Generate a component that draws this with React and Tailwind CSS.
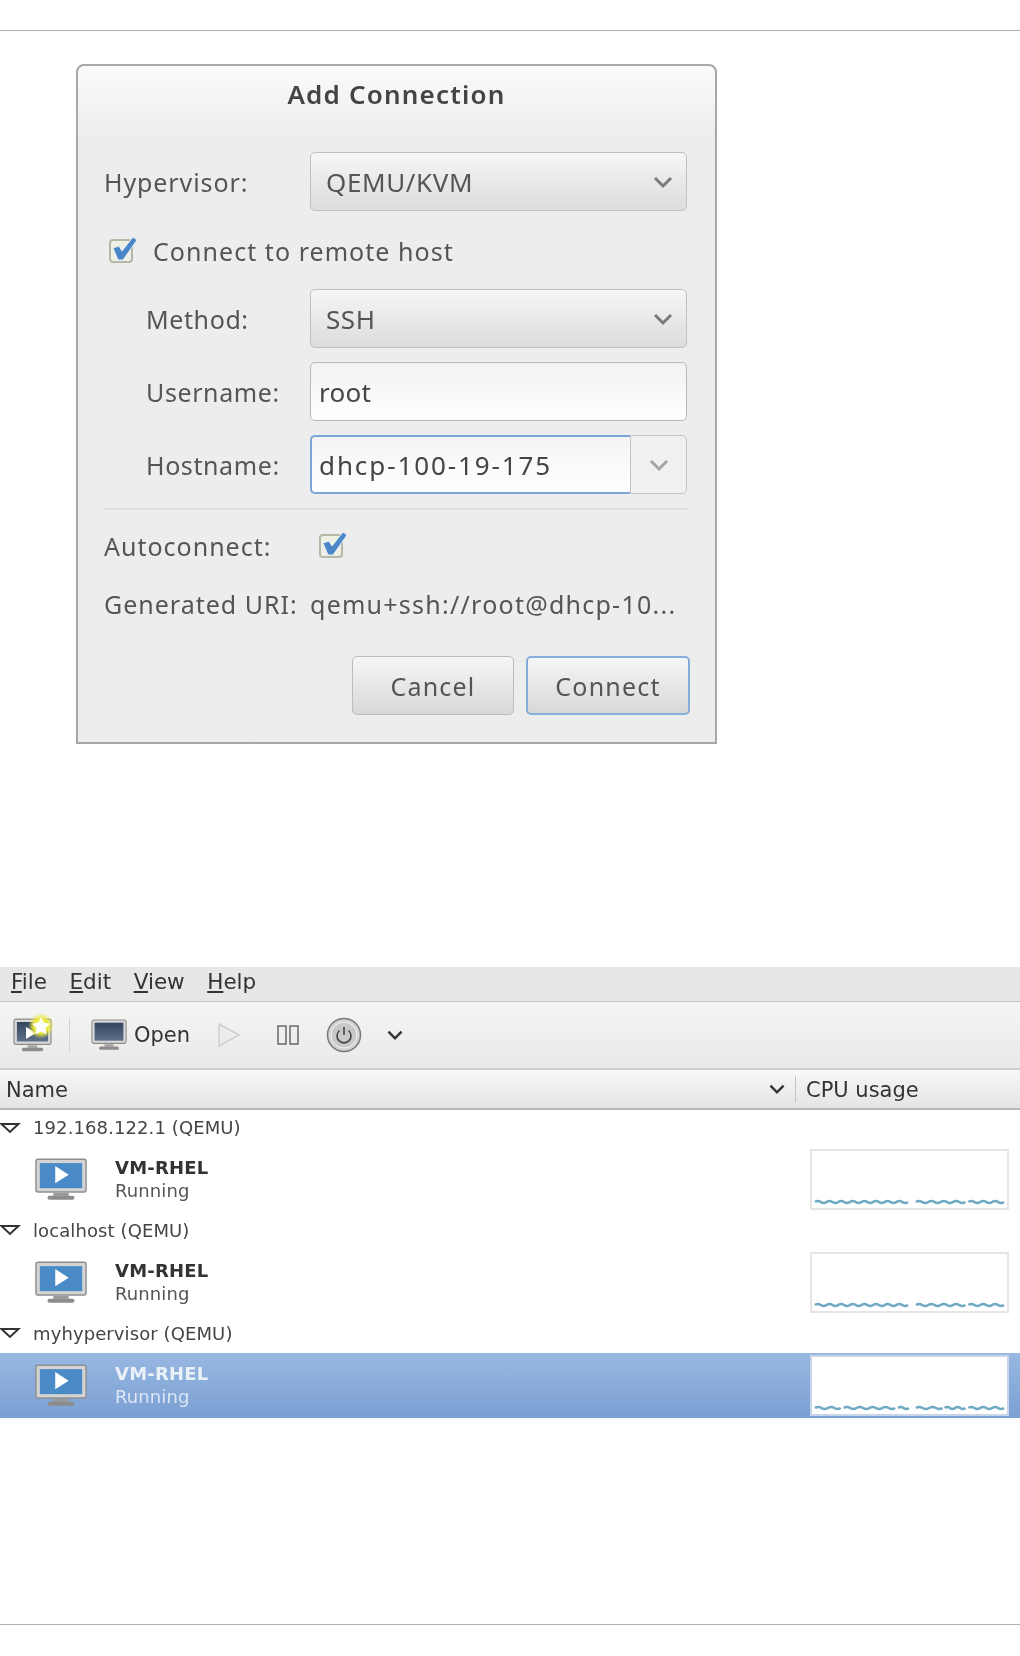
import React from 'react';

const dialogFont = { fontFamily: '"Noto Sans", sans-serif' };

function Chevron({ className = 'text-[#7a7a7a]', size = 22 }) {
  return (
    <svg width={size} height={size} viewBox="0 0 22 22" fill="none" className={className}>
      <path d="M3 7l8 8 8-8" stroke="currentColor" strokeWidth="3" />
    </svg>
  );
}

function Check() {
  return (
    <svg width="30" height="26" viewBox="0 0 30 26" className="-mt-[3px]">
      <rect x="1" y="3" width="22" height="22" rx="3" fill="#eef0e6" stroke="#b5b8a8" strokeWidth="2" />
      <path d="M4 11l6-2 3 5L24 0l4 3-14 20H9z" fill="#4a86c8" stroke="#e4ecf4" strokeWidth="1" />
    </svg>
  );
}

function Combo({ value }) {
  return (
    <div className="w-[377px] h-[59px] rounded-[5px] border border-[#c0c0c0] bg-linear-to-b from-[#f6f6f6] to-[#dcdcdc] flex items-center justify-between pl-[15px] pr-[12px] text-[26px] tracking-[0.6px] text-[#555]">
      <span className="pt-[2px]">{value}</span>
      <Chevron />
    </div>
  );
}

function FieldRow({ label, children, className = '' }) {
  return (
    <div className={`flex items-center pl-[68px] ${className}`}>
      <span className="w-[164px] pt-[3px] text-[25px] tracking-[0.6px] text-[#555]">{label}</span>
      {children}
    </div>
  );
}

function VmIcon() {
  return (
    <svg width="52" height="43" viewBox="0 0 54 44">
      <rect x="1" y="1" width="52" height="34" rx="2" fill="#d4d4d4" stroke="#8e8e8e" strokeWidth="1.5" />
      <rect x="5" y="5" width="44" height="26" fill="#4a8ac6" />
      <path d="M21 8l14 9-14 9z" fill="#ffffff" />
      <rect x="19" y="36" width="16" height="3" fill="#9a9a9a" />
      <rect x="13" y="39" width="28" height="4" rx="2" fill="#8c8c8c" />
    </svg>
  );
}

function DarkMonitor({ width, gradId }) {
  return (
    <svg width={width} height={width * 0.88} viewBox="0 0 40 35">
      <defs>
        <linearGradient id={gradId} x1="0" y1="0" x2="0" y2="1">
          <stop offset="0" stopColor="#33465e" />
          <stop offset="1" stopColor="#5d7088" />
        </linearGradient>
      </defs>
      <rect x="1" y="1" width="38" height="26" rx="2" fill="#d8d8d8" stroke="#8c8c8c" strokeWidth="1.2" />
      <rect x="4" y="4" width="32" height="20" fill={`url(#${gradId})`} />
      <rect x="15" y="28" width="10" height="2.5" fill="#a0a0a0" />
      <rect x="9" y="30.5" width="22" height="3.5" rx="1.7" fill="#8c8c8c" />
    </svg>
  );
}

const wave = (from, to) => {
  const n = Math.max(1, Math.round((to - from) / 12));
  const step = (to - from) / n;
  let d = `M${from} 3`;
  for (let i = 0; i < n; i++) d += ` q${step / 4} -2 ${step / 2} 0 t${step / 2} 0`;
  return d;
};

function Spark({ selected = false, segs }) {
  return (
    <div className={`w-[199px] h-[61px] border-2 bg-white flex items-end pb-[3px] px-[1px] ${selected ? 'border-[#c8d4e8]' : 'border-[#e6e4e4]'}`}>
      <svg width="195" height="6" viewBox="0 0 195 6" fill="none">
        {segs.map(([a, b]) => (
          <path key={a} d={wave(a + 2, b + 2)} stroke="#6fa9c4" strokeWidth="2.6" />
        ))}
      </svg>
    </div>
  );
}

function Group({ name, className = 'h-[38px]' }) {
  return (
    <div className={`${className} flex items-center pb-[2px] text-[18px] tracking-[0.1px] text-[#444]`}>
      <svg width="21" height="12" viewBox="0 0 21 12" fill="none" className="mr-[12px]">
        <path d="M1.5 2h17L10 10z" stroke="#333" strokeWidth="2" />
      </svg>
      {name}
    </div>
  );
}

function VmRow({ selected = false, segs }) {
  return (
    <div className={`h-[65px] flex items-center pl-[35px] pr-[11px] ${selected ? 'bg-linear-to-b from-[#98b8e2] to-[#7a9fd2]' : ''}`}>
      <VmIcon />
      <div className="ml-[28px] flex-1 leading-[23px] pb-[2px]">
        <div className={`text-[18px] font-bold tracking-[0.2px] ${selected ? 'text-[#eaf0f8]' : 'text-[#333]'}`}>VM-RHEL</div>
        <div className={`text-[18px] tracking-[0.1px] ${selected ? 'text-[#dce6f4]' : 'text-[#555]'}`}>Running</div>
      </div>
      <Spark selected={selected} segs={segs} />
    </div>
  );
}

export default function App() {
  const sparkA = [[0, 94], [102, 152], [155, 191]];
  const sparkB = [[0, 26], [29, 81], [84, 95], [102, 129], [131, 152], [155, 191]];

  return (
    <div className="w-[1020px] h-[1656px] bg-white flex flex-col blur-[0.5px]" style={{ fontFamily: '"DejaVu Sans", sans-serif' }}>
      <div className="mt-[30px] border-t border-[#b0b0b0]" />

      {/* Add Connection dialog */}
      <div
        className="ml-[76px] mt-[33px] w-[641px] h-[680px] rounded-t-[8px] border-2 border-[#a8a8a8] bg-[#ededed] bg-linear-to-b from-[#fbfbfb] to-[#ededed] to-[70px] flex flex-col"
        style={dialogFont}
      >
        <div className="h-[86px] pb-[30px] flex items-center justify-center text-[26px] font-semibold tracking-[1.2px] text-[#444]">Add Connection</div>

        <div className="flex items-center pl-[26px]">
          <span className="w-[206px] pt-[3px] text-[25px] tracking-[0.9px] text-[#555]">Hypervisor:</span>
          <Combo value="QEMU/KVM" />
        </div>

        <div className="h-[78px] flex items-center pl-[31px] pt-[2px]">
          <Check />
          <span className="ml-[14px] pt-[2px] text-[25px] tracking-[1.05px] text-[#555]">Connect to remote host</span>
        </div>

        <FieldRow label="Method:">
          <Combo value="SSH" />
        </FieldRow>

        <FieldRow label="Username:" className="mt-[14px]">
          <div className="w-[377px] h-[59px] rounded-[5px] border border-[#b8b8b8] bg-linear-to-b from-[#f2f2f2] to-white flex items-center pl-[8px] pt-[2px] text-[26px] tracking-[0.3px] text-[#444]">root</div>
        </FieldRow>

        <FieldRow label="Hostname:" className="mt-[14px]">
          <div className="w-[377px] h-[59px] flex">
            <div className="w-[320px] rounded-l-[5px] border-2 border-r-0 border-[#7ba5d8] bg-linear-to-b from-[#f4f4f4] to-white flex items-center pl-[7px] pt-[2px] text-[26px] tracking-[1.9px] text-[#444]">dhcp-100-19-175</div>
            <div className="flex-1 rounded-r-[5px] border border-[#c4c4c4] bg-[#f0f0ee] flex items-center justify-center">
              <Chevron className="text-[#a4a4a4]" />
            </div>
          </div>
        </FieldRow>

        <div className="ml-[26px] mr-[28px] mt-[14px] border-t-2 border-[#dfdfdf]" />

        <div className="mt-[18px] flex items-center pl-[26px]">
          <span className="w-[215px] text-[25px] tracking-[1px] text-[#555]">Autoconnect:</span>
          <Check />
        </div>

        <div className="mt-[20px] flex items-center pl-[26px]">
          <span className="w-[206px] text-[25px] tracking-[1px] text-[#555]">Generated URI:</span>
          <span className="text-[25px] tracking-[1.25px] text-[#555]">qemu+ssh://root@dhcp-10...</span>
        </div>

        <div className="mt-[33px] flex justify-end gap-[12px] pr-[25px]">
          <div className="w-[162px] h-[59px] rounded-[5px] border border-[#bcbcbc] bg-linear-to-b from-[#f6f6f6] to-[#d8d8d8] flex items-center justify-center pt-[2px] text-[25px] tracking-[1.2px] text-[#555]">Cancel</div>
          <div className="w-[164px] h-[59px] rounded-[5px] border-2 border-[#86acdc] bg-linear-to-b from-[#f6f6f6] to-[#d8d8d8] flex items-center justify-center pt-[2px] text-[25px] tracking-[1.2px] text-[#555]">Connect</div>
        </div>
      </div>

      {/* Virtual Machine Manager */}
      <div className="mt-[223px] h-[35px] bg-[#e8e7e5] border-b border-[#c4c4c4] flex items-center pl-[11px] pb-[4px] gap-[22.5px] text-[21.5px] text-[#333]">
        <span><u>F</u>ile</span>
        <span><u>E</u>dit</span>
        <span><u>V</u>iew</span>
        <span><u>H</u>elp</span>
      </div>

      <div className="h-[68px] bg-linear-to-b from-[#f5f5f3] to-[#e9e9e7] border-b-2 border-[#cfcfcf] flex items-center text-[#333] text-[21px]">
        <div className="relative ml-[13px]">
          <DarkMonitor width={39} gradId="newVm" />
          <svg width="10" height="12" viewBox="0 0 10 12" className="absolute top-[9px] left-[13px]">
            <path d="M0 0l10 6-10 6z" fill="#ffffff" />
          </svg>
          <svg width="26" height="26" viewBox="0 0 26 26" className="absolute -top-[5px] left-[15px]">
            <defs>
              <radialGradient id="starGlow">
                <stop offset="0.55" stopColor="#eeec40" />
                <stop offset="1" stopColor="#eeec40" stopOpacity="0" />
              </radialGradient>
            </defs>
            <circle cx="13" cy="13" r="13" fill="url(#starGlow)" />
            <path d="M13 4l2.8 5.8 6.2.9-4.5 4.4 1.1 6.3L13 18.4l-5.6 3 1.1-6.3L4 10.7l6.2-.9z" fill="#fff" />
          </svg>
        </div>
        <div className="ml-[17px] w-px h-[35px] bg-[#d4d4d4]" />
        <div className="ml-[21px]"><DarkMonitor width={36} gradId="openVm" /></div>
        <span className="ml-[7px] pt-[1px]">Open</span>
        <svg width="24" height="26" viewBox="0 0 24 26" fill="none" className="ml-[27px]">
          <path d="M2 2l20 11L2 24z" fill="#ececec" stroke="#cfcfcf" strokeWidth="1.5" />
        </svg>
        <svg width="22" height="22" viewBox="0 0 22 22" fill="none" className="ml-[36px]">
          <rect x="1" y="2" width="8" height="18" stroke="#6a6a6a" strokeWidth="1.5" fill="#eee" />
          <rect x="13" y="2" width="8" height="18" stroke="#6a6a6a" strokeWidth="1.5" fill="#eee" />
        </svg>
        <svg width="36" height="36" viewBox="0 0 36 36" fill="none" className="ml-[27px]">
          <circle cx="18" cy="18" r="16.5" fill="#d2d2d2" stroke="#7a7a7a" strokeWidth="1.5" />
          <circle cx="18" cy="18" r="13" fill="#c8c8c8" stroke="#f4f4f4" />
          <path d="M13.5 13.5a7 7 0 1 0 9 0M18 10v8" stroke="#444" strokeWidth="1.6" />
        </svg>
        <div className="ml-[24px]"><Chevron className="text-[#333]" size={18} /></div>
      </div>

      <div className="h-[40px] bg-linear-to-b from-[#f8f8f6] to-[#e4e4e2] border-b-2 border-[#b8b8b8] flex items-center pt-[3px] text-[21px] text-[#333]">
        <span className="pl-[6px] w-[768px]">Name</span>
        <Chevron className="text-[#333] -mt-[3px]" size={18} />
        <div className="ml-[9px] -mt-[3px] w-px h-[26px] bg-[#c4c4c4]" />
        <span className="ml-[10px]">CPU usage</span>
      </div>

      <Group name="192.168.122.1 (QEMU)" className="h-[37px]" />
      <VmRow segs={sparkA} />
      <Group name="localhost (QEMU)" />
      <VmRow segs={sparkA} />
      <Group name="myhypervisor (QEMU)" />
      <VmRow selected segs={sparkB} />

      <div className="mt-auto mb-[31px] border-t border-[#b0b0b0]" />
    </div>
  );
}
